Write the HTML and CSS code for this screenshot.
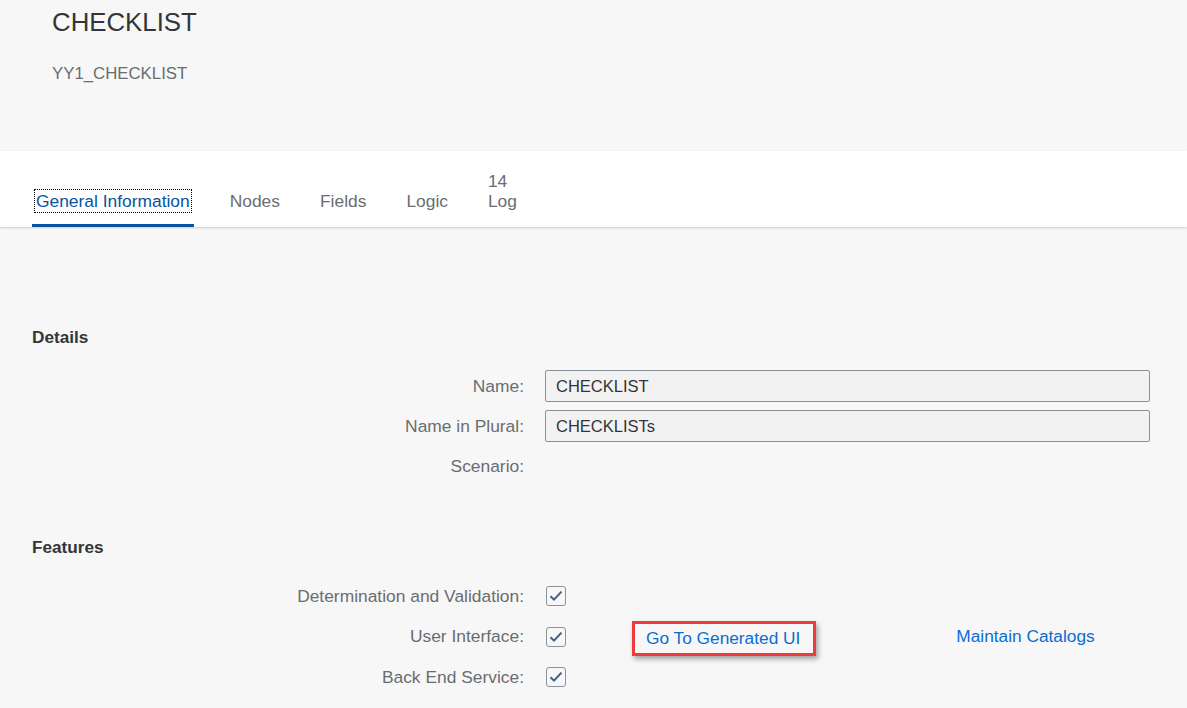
FILE: index.html
```html
<!DOCTYPE html>
<html>
<head>
<meta charset="utf-8">
<link rel="stylesheet" href="styles.css">
</head>
<body>
<header class="page-header">
  <h1 class="title">CHECKLIST</h1>
  <div class="subtitle">YY1_CHECKLIST</div>
</header>
<nav class="tabbar">
  <div class="tab tab-selected"><span class="tab-text focus">General Information</span></div>
  <div class="tab"><span class="tab-text">Nodes</span></div>
  <div class="tab"><span class="tab-text">Fields</span></div>
  <div class="tab"><span class="tab-text">Logic</span></div>
  <div class="tab"><span class="tab-count">14</span><span class="tab-text">Log</span></div>
</nav>
<main class="content">
  <h2 class="section-title section-details">Details</h2>
  <div class="form">
    <label class="label">Name:</label>
    <div class="field"><div class="input">CHECKLIST</div></div>
    <label class="label">Name in Plural:</label>
    <div class="field"><div class="input">CHECKLISTs</div></div>
    <label class="label">Scenario:</label>
    <div class="field"></div>
  </div>
  <h2 class="section-title section-features">Features</h2>
  <div class="form features">
    <label class="label">Determination and Validation:</label>
    <div class="field"><span class="checkbox"><svg width="14" height="12" viewBox="0 0 14 12"><path d="M1.5 6.2 L5 9.6 L12.5 1.6" fill="none" stroke="#3f5f86" stroke-width="2"/></svg></span></div>
    <label class="label">User Interface:</label>
    <div class="field">
      <span class="checkbox"><svg width="14" height="12" viewBox="0 0 14 12"><path d="M1.5 6.2 L5 9.6 L12.5 1.6" fill="none" stroke="#3f5f86" stroke-width="2"/></svg></span>
      <span class="highlight"><a class="link">Go To Generated UI</a></span>
      <a class="link link-catalogs">Maintain Catalogs</a>
    </div>
    <label class="label">Back End Service:</label>
    <div class="field"><span class="checkbox"><svg width="14" height="12" viewBox="0 0 14 12"><path d="M1.5 6.2 L5 9.6 L12.5 1.6" fill="none" stroke="#3f5f86" stroke-width="2"/></svg></span></div>
  </div>
</main>
</body>
</html>
```
FILE: styles.css
```css
html, body {
  margin: 0;
  padding: 0;
  background: #f7f7f7;
  font-family: "Liberation Sans", Arial, sans-serif;
  color: #32363a;
}

.page-header {
  height: 151px;
  box-sizing: border-box;
  padding: 6px 0 0 52px;
}

.title {
  margin: 0;
  font-size: 25.8px;
  line-height: 32px;
  font-weight: normal;
  color: #32363a;
}

.subtitle {
  margin-top: 26px;
  font-size: 16.8px;
  line-height: 20px;
  color: #6a6d70;
}

.tabbar {
  height: 76px;
  box-sizing: border-box;
  background: #ffffff;
  box-shadow: 0 1px 2px rgba(0, 0, 0, 0.18);
  display: flex;
  align-items: flex-end;
  gap: 32px;
  padding-left: 32px;
}

.tab {
  display: flex;
  flex-direction: column;
  align-items: flex-start;
  padding: 0 4px 13px 4px;
  border-bottom: 3px solid transparent;
  font-size: 17.4px;
  line-height: 20px;
  color: #6a6d70;
}

.tab-selected {
  border-bottom-color: #0854a0;
  color: #0854a0;
}

.tab-count {
  line-height: 20px;
}

.focus {
  outline: 1px dotted #000;
  outline-offset: 1px;
}

.content {
  padding: 100px 37px 0 32px;
}

.section-title {
  margin: 0;
  font-size: 17.2px;
  line-height: 20px;
  font-weight: bold;
  color: #32363a;
}

.form {
  display: grid;
  grid-template-columns: 492px 1fr;
  column-gap: 21px;
  grid-auto-rows: 32px;
  row-gap: 8px;
  margin-top: 23px;
}

.features {
  row-gap: 8.5px;
}

.section-features {
  margin-top: 55px;
}

.label {
  display: flex;
  align-items: center;
  justify-content: flex-end;
  font-size: 17.4px;
  color: #6a6d70;
}

.field {
  display: flex;
  align-items: center;
}

.input {
  flex: 1;
  height: 32px;
  box-sizing: border-box;
  border: 1px solid #89919a;
  border-radius: 2px;
  background: #f2f2f2;
  padding: 0 10px;
  display: flex;
  align-items: center;
  font-size: 16.5px;
  color: #32363a;
}

.checkbox {
  width: 20px;
  height: 20px;
  box-sizing: border-box;
  border: 1px solid #89919a;
  border-radius: 3px;
  background: #f7f7f7;
  display: flex;
  align-items: center;
  justify-content: center;
  margin-left: 1px;
}

.link {
  font-size: 17.3px;
  color: #0a6ed1;
  text-decoration: none;
  white-space: nowrap;
}

.highlight {
  margin-left: 66px;
  height: 35px;
  box-sizing: border-box;
  border: 3px solid #ee3a3f;
  padding: 0 13px 0 11px;
  display: flex;
  align-items: center;
  box-shadow: 2px 3px 5px rgba(0, 0, 0, 0.35);
  margin-top: 3px;
}

.link-catalogs {
  margin-left: 140px;
}
```
